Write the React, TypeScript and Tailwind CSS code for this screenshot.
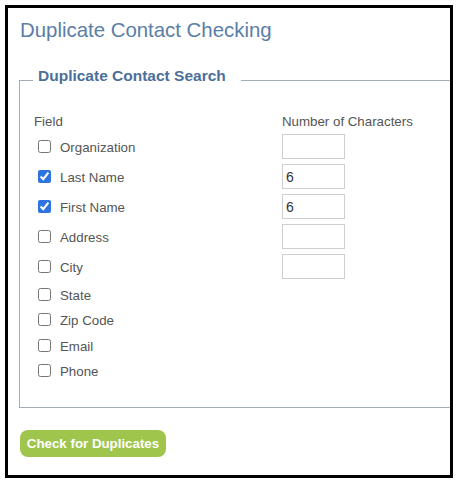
import { useState } from "react";

interface FieldRow {
  id: string;
  label: string;
  checked: boolean;
  chars?: string;
}

const fields: FieldRow[] = [
  { id: "org", label: "Organization", checked: false, chars: "" },
  { id: "last", label: "Last Name", checked: true, chars: "6" },
  { id: "first", label: "First Name", checked: true, chars: "6" },
  { id: "addr", label: "Address", checked: false, chars: "" },
  { id: "city", label: "City", checked: false, chars: "" },
  { id: "state", label: "State", checked: false },
  { id: "zip", label: "Zip Code", checked: false },
  { id: "email", label: "Email", checked: false },
  { id: "phone", label: "Phone", checked: false },
];

function Row({ field }: { field: FieldRow }) {
  const [checked, setChecked] = useState(field.checked);
  const [chars, setChars] = useState(field.chars ?? "");

  return (
    <div className="flex items-center h-[20.5px] has-[input[type=text]]:h-[25px]">
      <label className="w-[248px] flex items-center pl-[4px] leading-[15px] cursor-pointer">
        <input
          type="checkbox"
          checked={checked}
          onChange={(e) => setChecked(e.target.checked)}
          className="w-[13px] h-[13px] accent-[#2f74de]"
        />
        <span className="ml-[9px] pt-[2px]">{field.label}</span>
      </label>
      {field.chars !== undefined && (
        <input
          type="text"
          value={chars}
          onChange={(e) => setChars(e.target.value)}
          className="w-[63px] h-[25px] border border-[#cfcfcf] px-[3px] text-[14px] text-[#333] outline-none"
        />
      )}
    </div>
  );
}

export default function App() {
  return (
    <div className="w-[460px] h-[484px] bg-white pt-[5px] pl-[5px] font-['Liberation_Sans',Arial,sans-serif]">
      <div className="w-[448px] h-[473px] border-[3px] border-black overflow-hidden">
        <h1 className="pl-[12px] pt-[11px] text-[20.4px] leading-[23px] text-[#5a7ea6]">
          Duplicate Contact Checking
        </h1>

        <fieldset className="ml-[11px] mt-[25px] w-[470px] border border-[#a3adb8] pb-[26px] pl-[14px] text-[13.3px] text-[#555]">
          <legend className="ml-[-1px] pl-[5px] pr-[15px] pb-[8px] text-[15.5px] leading-[18px] font-bold text-[#4c6f99]">
            Duplicate Contact Search
          </legend>

          <div className="mt-[21px] flex flex-col gap-[5px]">
            <div className="flex items-center leading-[15px]">
              <div className="w-[248px]">Field</div>
              <div>Number of Characters</div>
            </div>
            {fields.map((f) => (
              <Row key={f.id} field={f} />
            ))}
          </div>
        </fieldset>

        <button className="ml-[12px] mt-[22px] w-[146px] h-[27px] rounded-[8px] bg-[#9fc54d] text-white font-bold text-[13.3px]">
          Check for Duplicates
        </button>
      </div>
    </div>
  );
}
